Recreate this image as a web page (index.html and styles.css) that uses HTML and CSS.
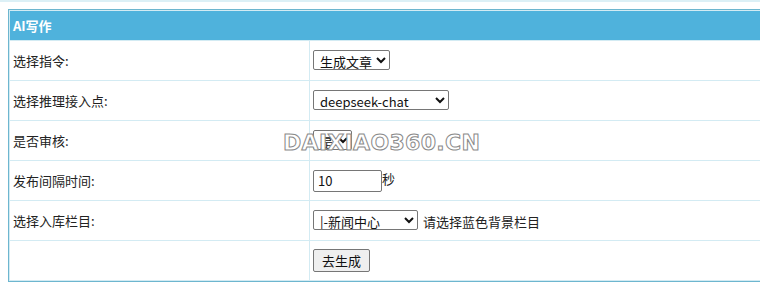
FILE: index.html
```html
<!DOCTYPE html>
<html lang="zh-CN">
<head>
    <meta charset="UTF-8">
    <title>AI写作</title>
    <link rel="stylesheet" href="styles.css">
</head>
<body>
    <div class="topline"></div>
    <table class="form-table">
        <tr>
            <td class="head" colspan="2">AI写作</td>
        </tr>
        <tr>
            <td class="label">选择指令:</td>
            <td class="field">
                <select class="sel-cmd">
                    <option>生成文章</option>
                </select>
            </td>
        </tr>
        <tr>
            <td class="label">选择推理接入点:</td>
            <td class="field">
                <select class="sel-model">
                    <option>deepseek-chat</option>
                </select>
            </td>
        </tr>
        <tr>
            <td class="label">是否审核:</td>
            <td class="field">
                <select class="sel-check">
                    <option>是</option>
                </select>
            </td>
        </tr>
        <tr>
            <td class="label">发布间隔时间:</td>
            <td class="field">
                <input class="num-input" type="text" value="10">秒
            </td>
        </tr>
        <tr>
            <td class="label">选择入库栏目:</td>
            <td class="field">
                <select class="sel-column">
                    <option>|-新闻中心</option>
                </select>
                <span class="hint">请选择蓝色背景栏目</span>
            </td>
        </tr>
        <tr>
            <td class="label"></td>
            <td class="field">
                <button class="go-btn">去生成</button>
            </td>
        </tr>
    </table>

    <div class="watermark">DAIXIAO360.CN</div>
</body>
</html>
```

FILE: styles.css
```css
html, body {
    overflow: hidden;
}

body {
    margin: 0;
    background: #fff;
    color: #222;
    font-family: "Microsoft YaHei", "Noto Sans CJK SC", sans-serif;
    font-size: 13px;
}

.topline {
    height: 2px;
    background: #dcf0f6;
}

.form-table {
    width: 1000px;
    margin: 7px 0 0 8px;
    border: 1px solid #6db6cf;
    border-spacing: 1px;
    background: #d3ebf3;
}

.form-table td {
    background: #fff;
    padding: 0 3px;
    height: 39px;
    white-space: nowrap;
}

.form-table td.head {
    height: 29px;
    background: #4fb2dc;
    color: #fff;
    font-weight: bold;
}

.form-table td.label {
    width: 293px;
}

select,
input,
button {
    font-family: "Microsoft YaHei", "Noto Sans CJK SC", sans-serif;
    font-size: 13px;
    color: #111;
    margin: 0;
}

select {
    height: 20px;
    padding: 0 0 0 2px;
    border: 1px solid #767676;
    border-radius: 2px;
    background: #fff;
}

.sel-cmd { width: 77px; }
.sel-model { width: 136px; }
.sel-check { width: 39px; }
.sel-column { width: 105px; }

.num-input {
    width: 69px;
    height: 22px;
    box-sizing: border-box;
    padding: 0 4px;
    border: 1px solid #767676;
    border-radius: 2px;
    vertical-align: middle;
}

.hint {
    margin-left: 2px;
}

.go-btn {
    width: 57px;
    height: 23px;
    padding: 0;
    border: 1px solid #767676;
    border-radius: 2px;
    background: #efefef;
}

.watermark {
    position: absolute;
    left: 283px;
    top: 130px;
    font-family: "DejaVu Sans", sans-serif;
    font-weight: bold;
    font-size: 22px;
    letter-spacing: 0.3px;
    color: #fff;
    -webkit-text-stroke: 1px #8a8a8a;
}
```
